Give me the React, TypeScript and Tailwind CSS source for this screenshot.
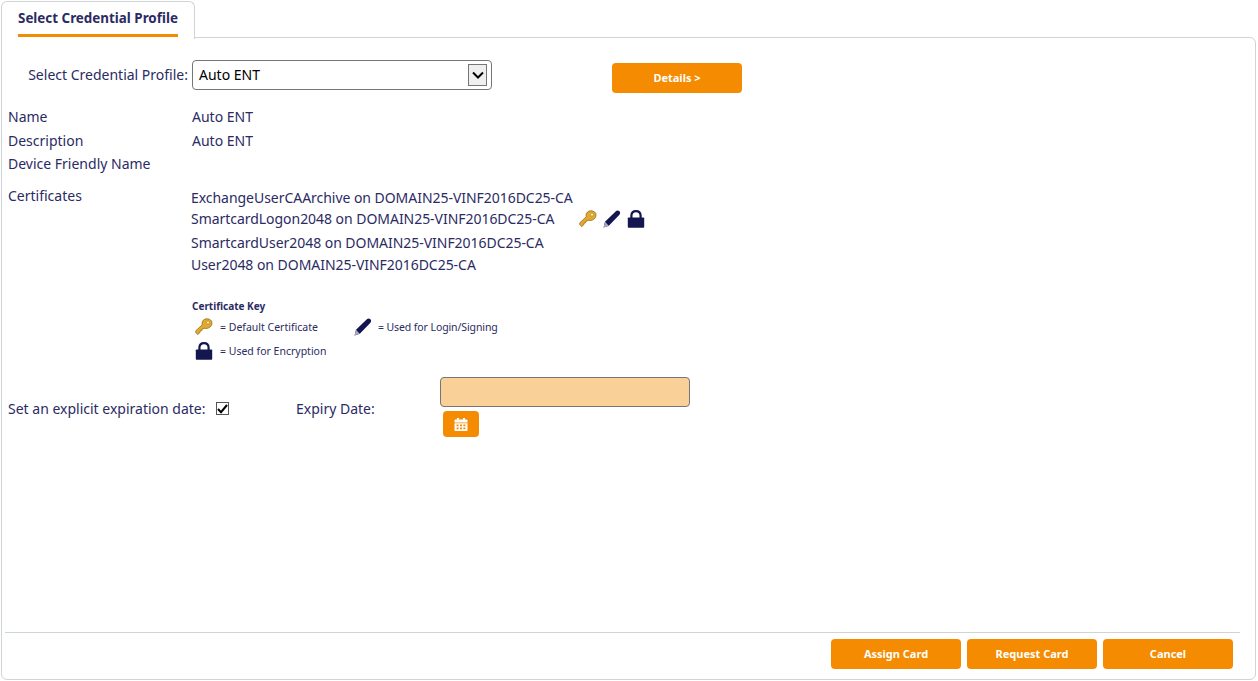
const orange = "bg-[#f58b00]";

const KeyIcon = ({ size = 18 }: { size?: number }) => (
  <svg width={size} height={size} viewBox="0 0 18 18">
    <path
      d="M11.8 0.8C9.2 0.8 7 2.8 7 5.4c0 .5.1 1 .2 1.4L0.8 12.8v1.8l1.8 2 2.2-1.8.2-1.6 1.6-.4.2-1.6 1.6-.2.6-1c.7.4 1.5.5 2.2.5 3 0 5.8-2.4 5.8-5.4C17.2 2.4 14.6.8 11.8.8z"
      fill="#e3a92c"
      stroke="#94701f"
      strokeWidth="0.8"
    />
    <circle cx="13" cy="4.6" r="1.5" fill="#fff5cf" stroke="#a57c22" strokeWidth="0.6" />
  </svg>
);

const PenIcon = ({ size = 18 }: { size?: number }) => (
  <svg width={size} height={size} viewBox="0 0 18 18">
    <path d="M0.6 17.6l1.4-5.8L12.6 1.4c1.2-1.2 2.8-1.2 3.8-.2s1 2.6-.2 3.8L5.8 15.8z" fill="#14164f" />
    <path d="M0.6 17.6l1.4-5.8 3.8 4z" fill="#a9a9c4" />
  </svg>
);

const LockIcon = ({ size = 18 }: { size?: number }) => (
  <svg width={size} height={size} viewBox="0 0 18 18">
    <path
      d="M4.4 8V5.8C4.4 2.8 6.2 1.1 9 1.1s4.6 1.7 4.6 4.7V8"
      fill="none"
      stroke="#14164f"
      strokeWidth="2.2"
    />
    <rect x="0.8" y="7.4" width="16.4" height="10.4" rx="0.8" fill="#14164f" />
  </svg>
);

const CalendarIcon = () => (
  <svg width="14" height="15" viewBox="0 0 14 15">
    <path d="M0.5 3.4c0-.6.4-1 1-1h1.5V1h2v1.4h4V1h2v1.4h1.5c.6 0 1 .4 1 1V5.4H.5z" fill="#fff" />
    <path
      fillRule="evenodd"
      d="M.5 6.2h13V13c0 .6-.4 1-1 1h-11c-.6 0-1-.4-1-1zM2.6 7.6v1.7h2V7.6zm3.4 0v1.7h2V7.6zm3.4 0v1.7h2V7.6zM2.6 10.6v1.7h2v-1.7zm3.4 0v1.7h2v-1.7zm3.4 0v1.7h2v-1.7z"
      fill="#fff"
    />
  </svg>
);

const ActionButton = ({ label }: { label: string }) => (
  <button className={`w-[130px] h-[30px] rounded-[4px] ${orange} text-white text-[11px] font-bold`}>
    {label}
  </button>
);

const InfoRow = ({ label, value, className }: { label: string; value?: string; className: string }) => (
  <div className={`flex ${className}`}>
    <div className="w-[184px]">{label}</div>
    <div>{value}</div>
  </div>
);

const certificates = [
  "ExchangeUserCAArchive on DOMAIN25-VINF2016DC25-CA",
  "SmartcardLogon2048 on DOMAIN25-VINF2016DC25-CA",
  "SmartcardUser2048 on DOMAIN25-VINF2016DC25-CA",
  "User2048 on DOMAIN25-VINF2016DC25-CA",
];

export default function App() {
  return (
    <div
      className="w-[1258px] h-[681px] bg-white overflow-hidden flex flex-col pl-px pr-px pb-px text-[#2b2b63] text-[14px] leading-[20px]"
      style={{ fontFamily: '"Noto Sans", "Open Sans", Arial, sans-serif' }}
    >
      {/* tab strip */}
      <div className="h-[38px] shrink-0 flex">
        <div className="relative z-10 w-[194px] h-[38px] mt-px bg-white border border-b-0 border-[#cfd4d6] rounded-t-[6px] pl-[16px] pt-[6px]">
          <div className="inline-block h-[29px] w-[160px] whitespace-nowrap border-b-[3px] border-[#f58b00] text-[13.4px] font-bold">
            Select Credential Profile
          </div>
        </div>
      </div>

      {/* panel */}
      <div className="-mt-px flex-1 min-h-0 mr-px flex flex-col border border-[#cfd4d6] rounded-b-[6px] rounded-tr-[6px] pl-[6px]">
        <div className="flex-1 min-h-0">
          <div className="flex mt-[22px] h-[30px]">
            <div className="w-[180px] text-right leading-[30px] whitespace-nowrap">Select Credential Profile:</div>
            <div className="ml-[4px] w-[300px] h-[30px] border border-[#767676] rounded-[4px] flex items-center justify-between pl-[6px] pr-[4px] text-black">
              <span>Auto ENT</span>
              <span className="w-[19px] h-[22px] bg-[#efefef] border border-[#767676] flex items-center justify-center">
                <svg width="12" height="8" viewBox="0 0 12 8">
                  <path d="M1 1.5l5 5 5-5" fill="none" stroke="#000" strokeWidth="2" />
                </svg>
              </span>
            </div>
            <button className={`ml-[120px] mt-[3px] w-[130px] h-[30px] rounded-[4px] ${orange} text-white text-[11px] font-bold`}>
              Details &gt;
            </button>
          </div>

          <InfoRow label="Name" value="Auto ENT" className="mt-[17px]" />
          <InfoRow label="Description" value="Auto ENT" className="mt-[4px]" />
          <InfoRow label="Device Friendly Name" className="mt-[3px]" />

          <div className="flex mt-[12px]">
            <div className="w-[183px]">Certificates</div>
            <div className="mt-[2px] tracking-[-0.04px]">
              <div>{certificates[0]}</div>
              <div className="flex items-center mt-[1px] h-[20px]">
                <span>{certificates[1]}</span>
                <span className="ml-[25px] flex gap-[6px]">
                  <KeyIcon />
                  <PenIcon />
                  <LockIcon />
                </span>
              </div>
              <div className="mt-[4px]">{certificates[2]}</div>
              <div className="mt-[2px]">{certificates[3]}</div>
            </div>
          </div>

          <div className="ml-[184px] mt-[24px] text-[10.5px] leading-[14px]">
            <div className="font-bold text-[10px]">Certificate Key</div>
            <div className="flex items-center mt-[5px] h-[18px]">
              <span className="ml-[3px] mr-[6px]"><KeyIcon /></span>
              <span className="ml-px w-[134px]">= Default Certificate</span>
              <PenIcon />
              <span className="ml-[6px] tracking-[-0.1px]">= Used for Login/Signing</span>
            </div>
            <div className="flex items-center mt-[6px] h-[18px]">
              <span className="ml-[3px] mr-[6px]"><LockIcon /></span>
              <span className="ml-px">= Used for Encryption</span>
            </div>
          </div>

          <div className="flex mt-[17px]">
            <div className="mt-[22px] w-[208px]">Set an explicit expiration date:</div>
            <span className="mt-[25px] w-[13px] h-[13px] border border-[#555] flex items-center justify-center">
              <svg width="11" height="10" viewBox="0 0 11 10">
                <path d="M1 5l3 3.2L10 1" fill="none" stroke="#000" strokeWidth="2" />
              </svg>
            </span>
            <div className="mt-[22px] ml-[67px] w-[144px]">Expiry Date:</div>
            <div>
              <div className="w-[250px] h-[30px] bg-[#f9d198] border border-[#767676] rounded-[4px]" />
              <button className={`ml-[3px] mt-[4px] w-[36px] h-[26px] rounded-[4px] ${orange} flex items-center justify-center`}>
                <CalendarIcon />
              </button>
            </div>
          </div>
        </div>

        {/* footer */}
        <div className="shrink-0 mr-[15px] -ml-[3px] border-t border-[#cfd4d6] pt-[6px] pb-[10px] pr-[7px] flex justify-end gap-[6px]">
          <ActionButton label="Assign Card" />
          <ActionButton label="Request Card" />
          <ActionButton label="Cancel" />
        </div>
      </div>
    </div>
  );
}
